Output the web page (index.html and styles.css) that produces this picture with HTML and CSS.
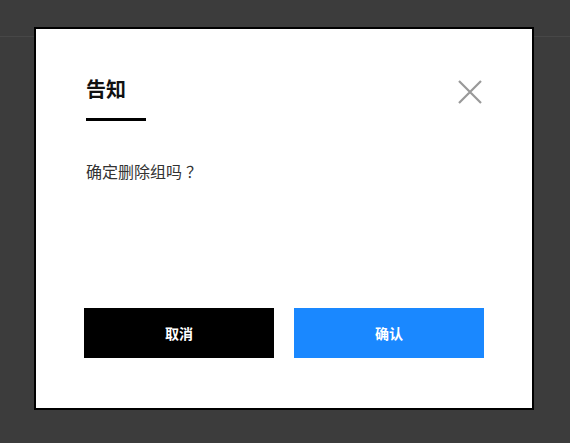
FILE: index.html
```html
<!DOCTYPE html>
<html lang="zh-CN">
<head>
  <meta charset="UTF-8">
  <title>告知</title>
  <link rel="stylesheet" href="styles.css">
</head>
<body>

  <div class="topbar"></div>

  <div class="overlay">
    <div class="dialog">
      <div class="dialog-head">
        <h2 class="dialog-title">告知</h2>
        <button class="close-btn" type="button" aria-label="关闭">
          <svg width="24" height="24" viewBox="0 0 24 24">
            <path d="M1 1 L23 23 M23 1 L1 23" stroke="#999" stroke-width="2.2" fill="none"/>
          </svg>
        </button>
      </div>

      <p class="dialog-msg">确定删除组吗<span class="punct">？</span></p>

      <div class="dialog-foot">
        <button class="btn btn-cancel" type="button">取消</button>
        <button class="btn btn-ok" type="button">确认</button>
      </div>
    </div>
  </div>

</body>
</html>
```

FILE: styles.css
```css
body {
  margin: 0;
  background: #3c3c3c;
  font-family: "Noto Sans CJK SC", "Noto Sans", sans-serif;
  color: #333;
  height: 443px;
}
.topbar {
  height: 36px;
  border-bottom: 1px solid #474747;
}
.overlay {
  position: absolute;
  top: 27px;
  left: 34px;
}
.dialog {
  box-sizing: border-box;
  width: 500px;
  height: 383px;
  background: #fff;
  border: 2px solid #000;
  padding: 0 50px;
  display: flex;
  flex-direction: column;
}
.dialog-head {
  display: flex;
  justify-content: space-between;
  align-items: flex-start;
  padding-top: 46px;
}
.dialog-title {
  margin: 0;
  font-size: 20px;
  line-height: 28px;
  font-weight: bold;
  color: #111;
}
.dialog-title::after {
  content: "";
  display: block;
  width: 60px;
  height: 3px;
  margin-top: 15px;
  background: #000;
}
.close-btn {
  margin-top: 5px;
  padding: 0;
  border: none;
  background: none;
  width: 24px;
  height: 24px;
  cursor: pointer;
}
.close-btn svg {
  display: block;
}
.dialog-msg {
  margin: 38px 0 0;
  font-size: 16px;
  line-height: 24px;
}
/* full-width question mark sits centred in the original font */
.punct {
  margin-left: 4px;
}
.dialog-foot {
  margin: auto -2px 50px;
  display: flex;
  gap: 20px;
}
.btn {
  width: 190px;
  height: 50px;
  border: none;
  color: #fff;
  font-family: inherit;
  font-size: 14px;
  font-weight: bold;
  cursor: pointer;
}
.btn-cancel {
  background: #000;
}
.btn-ok {
  background: #1a88ff;
}
```
